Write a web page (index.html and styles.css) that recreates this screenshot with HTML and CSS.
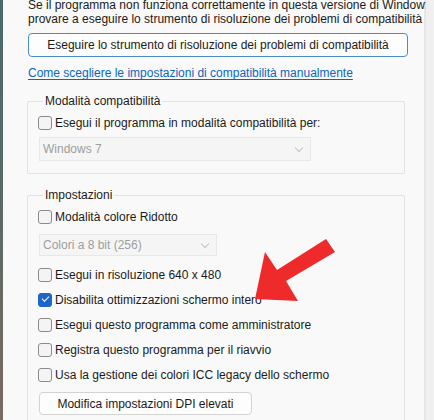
FILE: index.html
```html
<!DOCTYPE html>
<html>
<head>
    <meta charset="utf-8">
    <link rel="stylesheet" href="styles.css">
</head>
<body>
    <div class="edge"></div>
    <div class="panel">
        <p class="intro">Se il programma non funziona correttamente in questa versione di Window:<br>provare a eseguire lo strumento di risoluzione dei problemi di compatibilità</p>
        <button class="btn primary">Eseguire lo strumento di risoluzione dei problemi di compatibilità</button>
        <a class="link" href="#">Come scegliere le impostazioni di compatibilità manualmente</a>

        <fieldset class="group first">
            <legend>Modalità compatibilità</legend>
            <label class="row"><span class="check"></span>Esegui il programma in modalità compatibilità per:</label>
            <div class="select wide">Windows 7<span class="chev"></span></div>
        </fieldset>

        <fieldset class="group">
            <legend>Impostazioni</legend>
            <label class="row"><span class="check"></span>Modalità colore Ridotto</label>
            <div class="select narrow">Colori a 8 bit (256)<span class="chev"></span></div>
            <label class="row after-select"><span class="check"></span>Esegui in risoluzione 640 x 480</label>
            <label class="row"><span class="check on"></span>Disabilita ottimizzazioni schermo intero</label>
            <label class="row"><span class="check"></span>Esegui questo programma come amministratore</label>
            <label class="row"><span class="check"></span>Registra questo programma per il riavvio</label>
            <label class="row"><span class="check"></span>Usa la gestione dei colori ICC legacy dello schermo</label>
            <button class="btn dpi">Modifica impostazioni DPI elevati</button>
        </fieldset>

        <svg class="arrow" width="434" height="420" viewBox="0 0 434 420">
            <polygon points="326,239 335,252 286,281 298,301 255,299 265,252 277,270" fill="#ee2a2a"/>
        </svg>
    </div>
    <div class="side"></div>
</body>
</html>
```

FILE: styles.css
```css
html, body {
    margin: 0;
    height: 100%;
    overflow: hidden;
}

body {
    display: flex;
    background: #f9f9f9;
    font-family: "Liberation Sans", Arial, sans-serif;
    font-size: 12px;
    line-height: 14px;
    color: #1b1b1b;
}

.edge {
    width: 3px;
    flex: none;
    background: linear-gradient(#4b6a6b 0%, #5a6a66 50%, #7b6a60 100%);
}

.panel {
    flex: 1;
    min-width: 0;
    padding-left: 25px;
    padding-right: 16px;
    border-right: 2px solid #e6e6e6;
}

.side {
    width: 8px;
    flex: none;
    background: #f0f0f0;
}

.intro {
    margin: -2px 0 0 0;
    white-space: nowrap;
}

.btn {
    display: block;
    font: inherit;
    color: #1b1b1b;
    background: #fdfdfd;
    border: 1px solid #d3d3d3;
    border-radius: 4px;
    padding: 0;
}

.btn.primary {
    margin-top: 7px;
    width: 380px;
    height: 24px;
    border-color: #4a8bcb;
}

.link {
    display: block;
    margin-top: 9px;
    color: #0a66c2;
    text-decoration: underline;
    text-underline-offset: 2px;
}

.group {
    margin: 14px 0 0 -1px;
    padding: 0 0 12px 10px;
    width: 366px;
    border: 1px solid #e2e2e2;
    border-radius: 2px;
}

.group legend {
    padding: 0 2px;
    margin-left: 5px;
    line-height: 14px;
}

.row {
    display: flex;
    align-items: center;
    height: 14px;
    margin-top: 8px;
    white-space: nowrap;
}

.row + .row {
    margin-top: 11px;
}

.row.after-select {
    margin-top: 12px;
}

.check {
    width: 12px;
    height: 12px;
    border: 1px solid #8b8b8b;
    border-radius: 3px;
    background: #f4f4f4;
    margin-right: 3px;
    flex: none;
    position: relative;
}

.check.on {
    background: #1d66c9;
    border-color: #1d66c9;
}

.check.on::after {
    content: "";
    position: absolute;
    left: 3px;
    top: 2px;
    width: 6px;
    height: 3px;
    border-left: 1.2px solid #fff;
    border-bottom: 1.2px solid #fff;
    transform: rotate(-45deg);
}

.select {
    display: flex;
    align-items: center;
    justify-content: space-between;
    box-sizing: border-box;
    margin: 7px 0 0 1px;
    padding: 0 8px 0 3px;
    background: #f5f5f5;
    border: 1px solid #e8e8e8;
    color: #9e9e9e;
}

.select.wide {
    width: 272px;
    height: 24px;
}

.select.narrow {
    width: 178px;
    height: 22px;
    margin-top: 10px;
}

.chev {
    width: 5px;
    height: 5px;
    border-right: 1px solid #c4c4c4;
    border-bottom: 1px solid #c4c4c4;
    transform: rotate(45deg);
    margin-top: -3px;
}

.btn.dpi {
    margin: 10px 0 0 1px;
    width: 213px;
    height: 23px;
}

.arrow {
    position: absolute;
    left: 0;
    top: 0;
    pointer-events: none;
}
```
